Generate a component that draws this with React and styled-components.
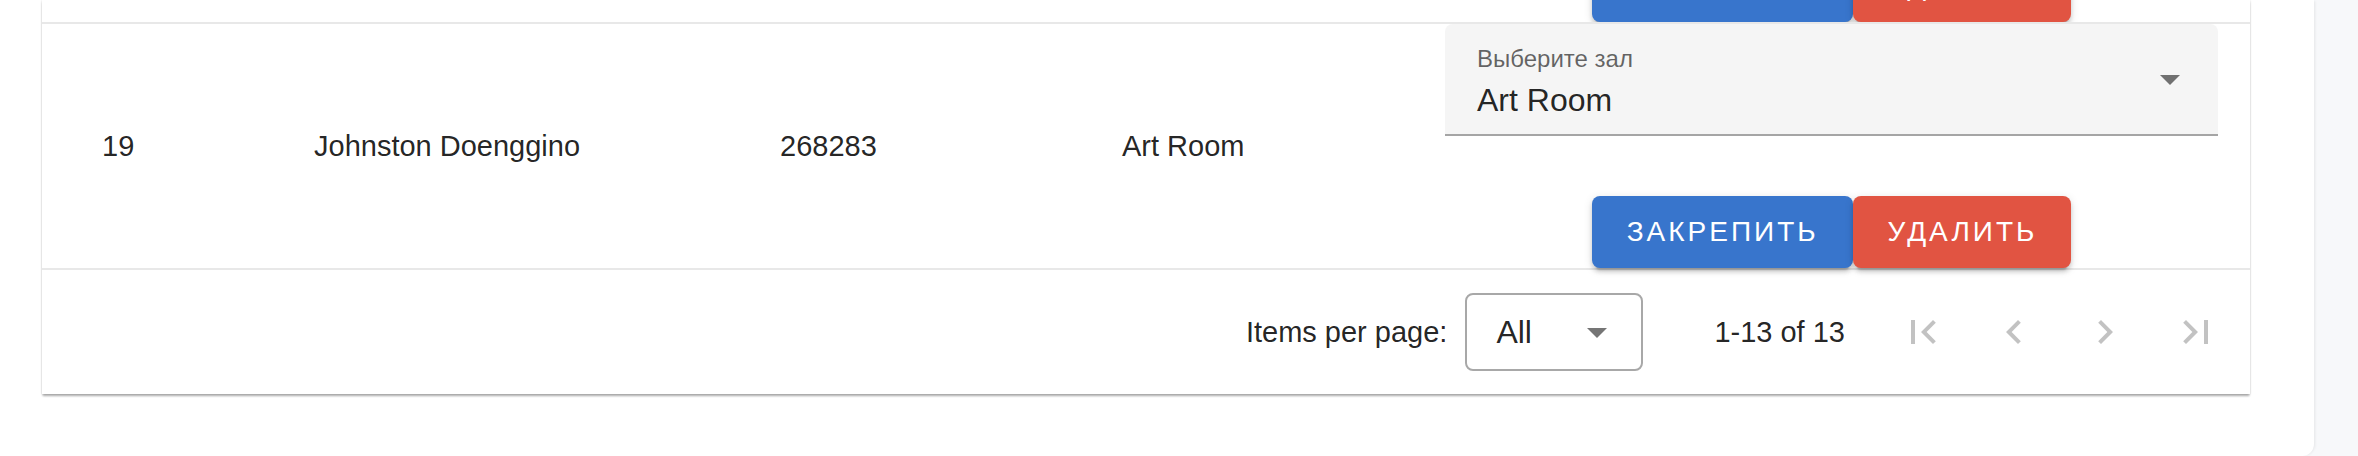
import React from "react";
import styled, { createGlobalStyle } from "styled-components";

const DIVIDER = "#e8e8e8";
const COLS = "240px 466px 342px 323px 1fr";

const GlobalStyle = createGlobalStyle`
  html, body { margin: 0; padding: 0; background: #f7f8fa; }
  body {
    font-family: "Liberation Sans", Arial, Helvetica, sans-serif;
    color: rgba(0, 0, 0, 0.87);
    overflow: hidden;
  }
  * { box-sizing: border-box; }
`;

const Page = styled.div`
  width: 2358px;
  height: 456px;
  overflow: hidden;
  background: #f7f8fa;
`;

const Panel = styled.div`
  width: 2314px;
  height: 456px;
  background: #fff;
  border-bottom-right-radius: 12px;
  box-shadow: 2px 0 3px -1px rgba(0, 0, 0, 0.08);
  padding: 0 64px 0 42px;
`;

const Card = styled.div`
  background: #fff;
  box-shadow: 0 3px 2px -1px rgba(0, 0, 0, 0.22), 0 2px 2px rgba(0, 0, 0, 0.12),
    0 0 2px rgba(0, 0, 0, 0.14);
`;

const TailRow = styled.div`
  display: grid;
  grid-template-columns: ${COLS};
  height: 24px;
  border-bottom: 2px solid ${DIVIDER};
`;

const TailActions = styled.div`
  grid-column: 5;
  height: 22px;
  overflow: hidden;
  display: flex;
  flex-direction: column;
  justify-content: flex-end;
  padding: 0 32px;
`;

const Row = styled.div`
  display: grid;
  grid-template-columns: ${COLS};
  align-items: center;
  border-bottom: 2px solid ${DIVIDER};
`;

const Cell = styled.div`
  padding: 0 32px 0 ${(p) => (p.$first ? "60px" : "32px")};
  font-size: 29px;
  white-space: nowrap;
`;

const ActionsCell = styled.div`
  align-self: stretch;
  padding: 0 32px;
  display: flex;
  flex-direction: column;
  gap: 60px;
`;

const Field = styled.div`
  height: 112px;
  background: #f5f5f5;
  border-radius: 8px 8px 0 0;
  border-bottom: 2px solid #a5a5a5;
  display: flex;
  align-items: center;
  padding: 0 24px 0 32px;
`;

const FieldText = styled.div`
  flex: 1;
  display: flex;
  flex-direction: column;
  margin-top: 2px;
`;

const FieldLabel = styled.div`
  font-size: 24px;
  line-height: 24px;
  margin-top: 2px;
  color: rgba(0, 0, 0, 0.6);
`;

const FieldValue = styled.div`
  font-size: 32px;
  line-height: 32px;
  margin-top: 13px;
  color: rgba(0, 0, 0, 0.87);
`;

const ButtonGroup = styled.div`
  display: flex;
  justify-content: center;
  flex-shrink: 0;
`;

const ActionButton = styled.button`
  height: 72px;
  padding: 0 34px 0 35px;
  border: none;
  border-radius: 8px;
  background: ${(p) => p.$color};
  color: #fff;
  font-family: inherit;
  font-size: 28px;
  letter-spacing: 3px;
  text-transform: uppercase;
  box-shadow: 0 6px 2px -4px rgba(0, 0, 0, 0.2), 0 4px 4px 0 rgba(0, 0, 0, 0.14),
    0 2px 10px 0 rgba(0, 0, 0, 0.12);
`;

const Footer = styled.div`
  height: 124px;
  display: flex;
  align-items: center;
  justify-content: flex-end;
  padding-right: 18px;
  font-size: 29px;
`;

const PerPageLabel = styled.span`
  margin-right: 18px;
`;

const PerPageSelect = styled.div`
  width: 178px;
  height: 78px;
  border: 2px solid #a8a8a8;
  border-radius: 8px;
  display: flex;
  align-items: center;
  justify-content: space-between;
  padding: 0 20px 0 29px;
`;

const PerPageValue = styled.span`
  font-size: 32px;
`;

const PageText = styled.span`
  margin: 0 42px 0 71px;
`;

const Pager = styled.div`
  display: flex;
  gap: 19px;
`;

const IconButton = styled.button`
  width: 72px;
  height: 72px;
  padding: 0;
  border: none;
  background: none;
  display: flex;
  align-items: center;
  justify-content: center;
`;

const ICONS = {
  first: "M18.41,16.59L13.82,12L18.41,7.41L17,6L11,12L17,18L18.41,16.59M6,6H8V18H6V6Z",
  prev: "M15.41,16.58L10.83,12L15.41,7.41L14,6L8,12L14,18L15.41,16.58Z",
  next: "M8.59,16.58L13.17,12L8.59,7.41L10,6L16,12L10,18L8.59,16.58Z",
  last: "M5.59,7.41L10.18,12L5.59,16.59L7,18L13,12L7,6L5.59,7.41M16,6H18V18H16V6Z",
  down: "M7,10L12,15L17,10H7Z",
};

const Icon = ({ d, color }) => (
  <svg width="48" height="48" viewBox="0 0 24 24" aria-hidden="true">
    <path d={d} fill={color} />
  </svg>
);

const Actions = () => (
  <ButtonGroup>
    <ActionButton $color="#3875cc">Закрепить</ActionButton>
    <ActionButton $color="#e15442">Удалить</ActionButton>
  </ButtonGroup>
);

export default function App() {
  return (
    <>
      <GlobalStyle />
      <Page>
        <Panel>
          <Card>
            <TailRow>
              <TailActions>
                <Actions />
              </TailActions>
            </TailRow>
            <Row>
              <Cell $first>19</Cell>
              <Cell>Johnston Doenggino</Cell>
              <Cell>268283</Cell>
              <Cell>Art Room</Cell>
              <ActionsCell>
                <Field>
                  <FieldText>
                    <FieldLabel>Выберите зал</FieldLabel>
                    <FieldValue>Art Room</FieldValue>
                  </FieldText>
                  <Icon d={ICONS.down} color="rgba(0,0,0,0.54)" />
                </Field>
                <Actions />
              </ActionsCell>
            </Row>
            <Footer>
              <PerPageLabel>Items per page:</PerPageLabel>
              <PerPageSelect>
                <PerPageValue>All</PerPageValue>
                <Icon d={ICONS.down} color="rgba(0,0,0,0.54)" />
              </PerPageSelect>
              <PageText>1-13 of 13</PageText>
              <Pager>
                {["first", "prev", "next", "last"].map((k) => (
                  <IconButton key={k} disabled aria-label={k}>
                    <Icon d={ICONS[k]} color="rgba(0,0,0,0.24)" />
                  </IconButton>
                ))}
              </Pager>
            </Footer>
          </Card>
        </Panel>
      </Page>
    </>
  );
}
